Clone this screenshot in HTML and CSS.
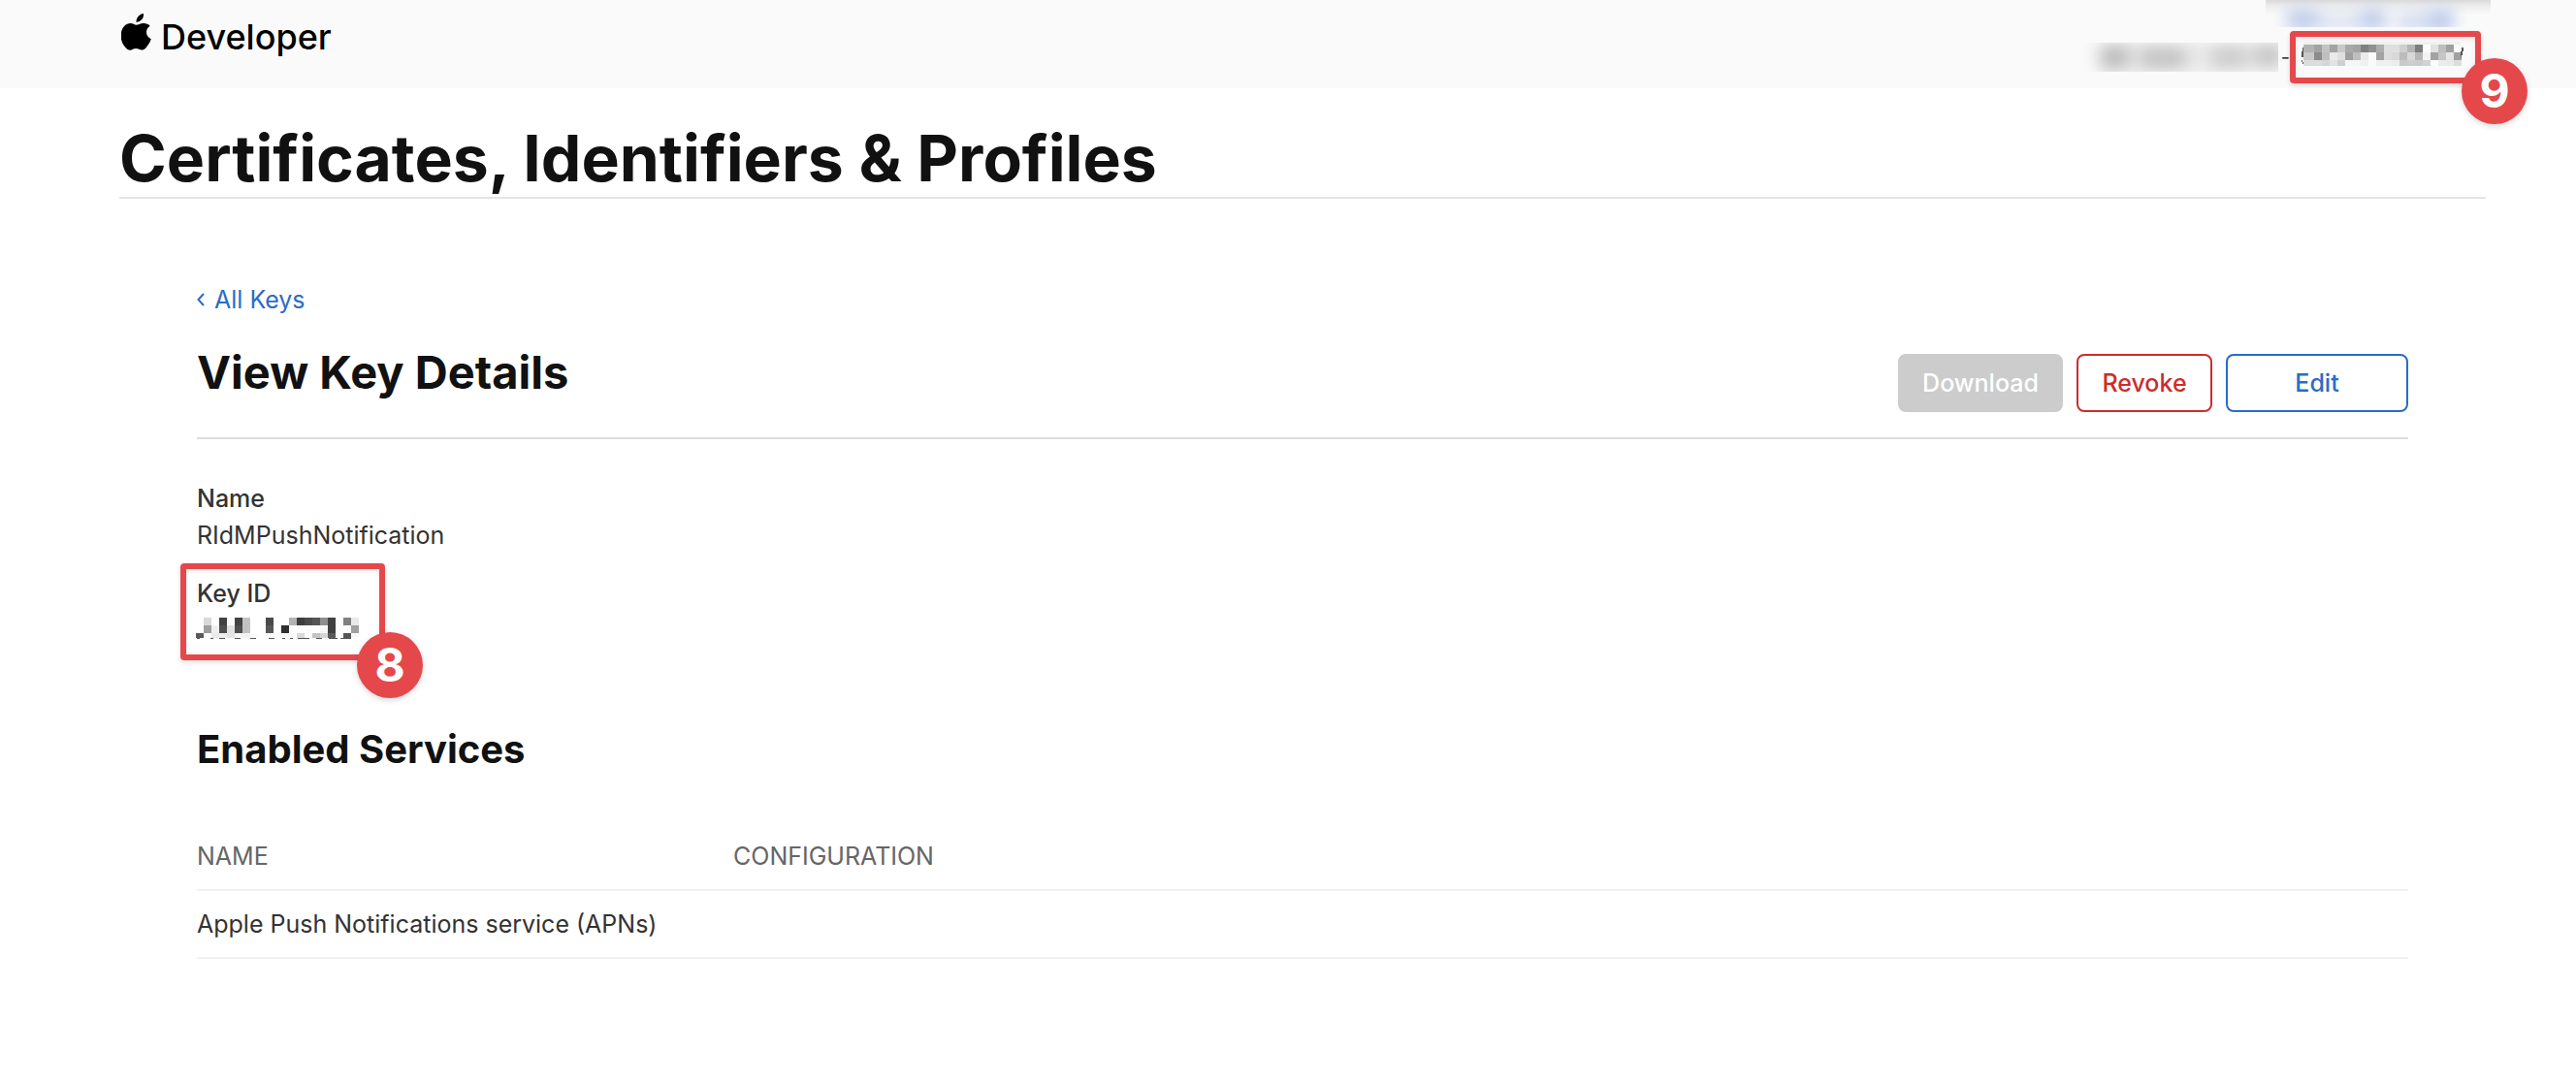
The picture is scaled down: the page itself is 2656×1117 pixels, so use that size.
FILE: index.html
```html
<!DOCTYPE html>
<html lang="en">
<head>
<meta charset="utf-8">
<meta name="viewport" content="width=device-width, initial-scale=1">
<title>Certificates, Identifiers &amp; Profiles</title>
<link rel="stylesheet" href="styles.css">
</head>
<body>
<header class="topbar">
  <a class="brand" href="#">
    <svg class="brand-logo" viewBox="0 0 31 38" aria-hidden="true"><path d="M23 0C23.300 2.400 22.400 4.700 21 6.300C19.600 8 17.600 9 15.500 8.800C15.300 6.500 16.300 4.300 17.700 2.800C19.100 1.200 21.300.1 23 0ZM29.700 12.800C27.300 14.300 26 16.500 26 19.300C26 22.500 28 25.100 30.800 26.200C30.200 28.100 29.200 30.100 27.900 32C26 34.800 24.300 37.600 21.400 37.600C18.700 37.600 18.100 36 15.200 36C12.300 36 11.500 37.700 9 37.700C6.200 37.700 4.200 35.100 2.500 32.600C-.7 27.900-1.300 20.500 1.300 15.600C3 12.300 6 10.200 9.200 10.100C11.700 10 13.900 11.800 15.600 11.800C17.300 11.800 20 9.800 23.200 10C25.800 10.100 28.100 11 29.700 12.800Z"/></svg>
    <span>Developer</span>
  </a>
  <div class="account">
    <svg class="account-name" width="232" height="28" aria-hidden="true">
      <defs>
        <linearGradient id="shade" x1="0" y1="0" x2="0" y2="1"><stop offset="0" stop-color="#d9d9d9"/><stop offset=".2" stop-color="#ececec"/><stop offset=".55" stop-color="#fafafa"/></linearGradient>
        <filter id="soft" x="-50%" y="-100%" width="200%" height="300%"><feGaussianBlur stdDeviation="8"/></filter>
      </defs>
      <rect width="232" height="28" fill="url(#shade)"/>
      <g fill="#bccaea" filter="url(#soft)"><rect x="22" y="10" width="32" height="20"/><rect x="54" y="14" width="46" height="16" opacity=".5"/><rect x="98" y="10" width="26" height="20"/><rect x="136" y="14" width="34" height="16" opacity=".7"/><rect x="168" y="10" width="26" height="22"/></g>
    </svg>
    <div class="account-row">
      <svg width="204" height="30" aria-hidden="true">
        <g fill="#bdbdbd" filter="url(#soft)"><rect x="16" y="0" width="200" height="30" opacity=".3"/><rect x="22" y="3" width="28" height="24"/><rect x="62" y="4" width="46" height="24" opacity=".8"/><rect x="136" y="3" width="36" height="24" opacity=".6"/><rect x="180" y="2" width="26" height="22" opacity=".8"/></g>
      </svg>
      <span class="dash">-</span>
      <div class="callout team">
        <svg class="mosaic" width="167" height="25" viewBox="-2 0 167 25" shape-rendering="crispEdges" aria-hidden="true" id="team-id"></svg>
        <span class="badge">9</span>
      </div>
    </div>
  </div>
</header>
<main class="page">
  <h1 class="page-title">Certificates, Identifiers &amp; Profiles</h1>
  <div class="content">
    <a class="back" href="#"><svg width="8" height="14" viewBox="0 0 8 14" aria-hidden="true"><path d="M7 1L1.500 7L7 13"/></svg><span>All Keys</span></a>
    <div class="heading-row">
      <h2 class="heading">View Key Details</h2>
      <div class="actions">
        <button class="btn btn-download" type="button" disabled>Download</button>
        <button class="btn btn-revoke" type="button">Revoke</button>
        <button class="btn btn-edit" type="button">Edit</button>
      </div>
    </div>
    <dl class="details">
      <div class="detail">
        <dt>Name</dt>
        <dd>RIdMPushNotification</dd>
      </div>
      <div class="detail">
        <dt>Key ID</dt>
        <dd><svg class="mosaic" width="169" height="22" shape-rendering="crispEdges" aria-hidden="true" id="key-id"></svg></dd>
        <div class="callout key"><span class="badge">8</span></div>
      </div>
    </dl>
    <h3 class="subheading">Enabled Services</h3>
    <table class="services">
      <thead><tr><th class="col-name" scope="col">NAME</th><th scope="col">CONFIGURATION</th></tr></thead>
      <tbody><tr><td>Apple Push Notifications service (APNs)</td><td></td></tr></tbody>
    </table>
  </div>
</main>
<script src="mosaic.js"></script>
</body>
</html>
```
FILE: styles.css
```css
* { box-sizing: border-box; }

body {
  margin: 0;
  background: #fff;
  color: #333;
  font: 400 25px/38px Inter, "Liberation Sans", sans-serif;
}

.topbar {
  display: flex;
  justify-content: space-between;
  align-items: flex-start;
  height: 91px;
  padding: 0 88px 0 125px;
  background: #fafafa;
}

.brand {
  display: flex;
  align-items: flex-start;
  gap: 10px;
  padding-top: 14px;
  color: #000;
  font-size: 36px;
  font-weight: 500;
  line-height: 48px;
  text-decoration: none;
}

.brand-logo { width: 31px; height: 38px; }

.account {
  display: flex;
  flex-direction: column;
  align-items: flex-end;
  gap: 4px;
}

.account svg { display: block; }

.account-row {
  display: flex;
  align-items: center;
  padding-right: 10px;
}

.dash {
  padding-left: 3px;
  font-size: 20px;
}

.callout {
  border: 6px solid #e5484b;
  border-radius: 4px;
  box-shadow: 0 2px 5px rgba(0, 0, 0, .14), inset 0 2px 5px rgba(0, 0, 0, .1);
}

.team {
  position: relative;
  width: 197px;
  height: 54px;
  padding: 5px 6px;
}

.badge {
  position: absolute;
  display: flex;
  align-items: center;
  justify-content: center;
  width: 68px;
  height: 68px;
  border-radius: 50%;
  background: #e5484b;
  box-shadow: 0 2px 6px rgba(0, 0, 0, .16);
  color: #fff;
  font-size: 48px;
  font-weight: 700;
  line-height: 68px;
}

.team .badge { right: -54px; bottom: -48px; }

.page { padding: 32px 93px 0 123px; }

.page-title {
  margin: 0;
  border-bottom: 2px solid #e3e3e3;
  color: #111;
  font-size: 66px;
  font-weight: 700;
  line-height: 80px;
}

.content { padding: 85px 80px 0; }

.back {
  display: flex;
  align-items: center;
  gap: 10px;
  width: fit-content;
  color: #2a6cc6;
  text-decoration: none;
}

.back path { fill: none; stroke: currentColor; stroke-width: 2; }

.heading-row {
  display: flex;
  justify-content: space-between;
  align-items: flex-start;
  padding: 28px 0 26px;
  border-bottom: 2px solid #ddd;
}

.heading {
  margin: 0;
  color: #111;
  font-size: 47px;
  font-weight: 700;
  line-height: 56px;
}

.actions { display: flex; gap: 14px; padding-top: 9px; }

.btn {
  height: 60px;
  padding: 0;
  border: 2px solid currentColor;
  border-radius: 8px;
  background: #fff;
  font: 500 25px/38px Inter, "Liberation Sans", sans-serif;
}

.btn-download { width: 170px; border-color: #ccc; background: #ccc; color: #fff; }
.btn-revoke { width: 140px; color: #ce2c2c; }
.btn-edit { width: 188px; color: #2a6cc6; }

.details {
  display: flex;
  flex-direction: column;
  gap: 22px;
  margin: 0;
  padding: 42px 0 80px;
}

.detail { position: relative; }
.detail dt { font-weight: 500; }
.detail dd { height: 38px; margin: 0; }
.detail .mosaic { display: block; margin: 6px 0 0 -1px; }
.detail dd:has(.mosaic) { padding-top: 6px; }
.detail dd .mosaic { margin-top: 0; }

.key {
  position: absolute;
  top: -12px;
  left: -17px;
  width: 211px;
  height: 100px;
}

.key .badge { right: -45px; bottom: -45px; }

.subheading {
  margin: 0;
  color: #111;
  font-size: 40px;
  font-weight: 700;
  line-height: 48px;
}

.services {
  width: 100%;
  margin-top: 51px;
  border-collapse: collapse;
  table-layout: fixed;
}

.services th,
.services td {
  height: 70px;
  padding: 0;
  border-bottom: 2px solid #f1f1f1;
  text-align: left;
}

.services th { color: #666; font-weight: 400; }
.services .col-name { width: 553px; }
```
FILE: mosaic.js
```js
// Pixelated identifiers: each two-digit entry is the grey level of one tile.
var tile = 8;

function rect(svg, x, y, w, h, fill) {
  var r = document.createElementNS("http://www.w3.org/2000/svg", "rect");
  r.setAttribute("x", x);
  r.setAttribute("y", y);
  r.setAttribute("width", w);
  r.setAttribute("height", h);
  r.setAttribute("fill", fill);
  svg.appendChild(r);
}

function drawTiles(svg, left, top, rows, heights) {
  var y = top;
  rows.forEach(function (row, i) {
    row.split(" ").forEach(function (g, j) {
      rect(svg, left + j * tile, y, tile, heights[i], "#" + g + g + g);
    });
    y += heights[i];
  });
}

var team = document.getElementById("team-id");
rect(team, 0, 0, 162, 3, "#f0f0f0");
rect(team, 0, 3, 3, 8, "#b3b3b3");
rect(team, 0, 11, 3, 8, "#c9c9c9");
rect(team, 0, 19, 3, 6, "#dcdcdc");
drawTiles(team, 3, 3, [
  "b3 a3 c3 a3 c9 a9 a3 80 90 ae df df cf b5 7e fb e2 be a0 fa",
  "c9 8c bf ea df a0 bf ea fa a3 dd d8 bc d8 b7 f3 a3 c6 e6 a0",
  "dc dc d6 e2 d0 f6 f6 f0 fa f0 f0 ec ca ce cb d3 fb ec ea dd"
], [8, 8, 6]);
rect(team, -1, 6, 1, 4, "#555");
rect(team, -2, 10, 2, 6, "#555");
rect(team, -2, 19, 1, 2, "#555");
rect(team, -1, 21, 1, 2, "#555");
rect(team, 163, 6, 2, 4, "#555");
rect(team, 162, 10, 2, 4, "#555");
rect(team, 162, 14, 1, 3, "#777");

var key = document.getElementById("key-id");
drawTiles(key, 0, 0, [
  "ff d9 ff 42 fb 42 c2 ff ff 4a ff ff b3 3e 4c 55 8e 40 ff 80 ea",
  "ff 9e f0 50 e2 4e c2 ff ff 58 ff 30 ff fc fc fc f6 40 ff ff a0",
  "5a ff ea ee e4 f6 f3 fb ff f9 fb fb fb d9 fb c2 d6 5a ff 55 f8"
], [8, 8, 5]);
[[1, 3], [15, 3], [24, 6], [40, 6], [56, 6], [75, 6], [89, 3], [97, 3], [105, 12], [124, 6], [137, 9], [149, 11]].forEach(function (d) {
  rect(key, d[0], 21, d[1], 1, "#555");
});
```
